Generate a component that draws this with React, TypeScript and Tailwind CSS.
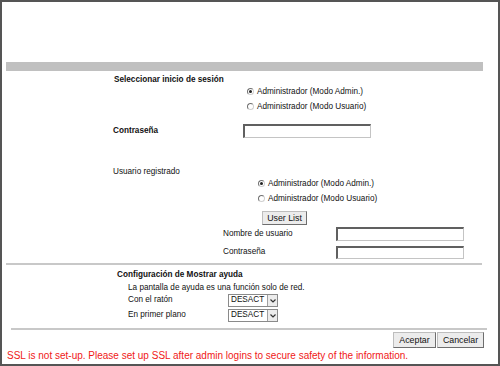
import React from "react";

const font = "font-['Liberation_Sans',Arial,sans-serif]";

function Radio({ checked, label }: { checked?: boolean; label: string }) {
  return (
    <div className="flex items-center gap-[3px]">
      <span className="w-[7px] h-[7px] rounded-full border border-[#707070] border-r-[#d0d0d0] border-b-[#d0d0d0] bg-white flex items-center justify-center">
        {checked && <span className="w-[3px] h-[3px] rounded-full bg-[#222]" />}
      </span>
      <span>{label}</span>
    </div>
  );
}

function TextBox({ w, h }: { w: string; h: string }) {
  return (
    <div
      className={`${w} ${h} bg-white border-t-2 border-l-2 border-r border-b border-[#606060] border-r-[#c4c4c4] border-b-[#c4c4c4]`}
    />
  );
}

function Select() {
  return (
    <div className="w-[50px] h-[13px] flex border border-[#8a8a8a] bg-white">
      <div className="flex-1 flex items-center pl-[2px] text-[8.2px] text-[#111]">DESACT</div>
      <div className="w-[10px] h-full bg-[#ececec] border-l border-[#a0a0a0] flex items-center justify-center">
        <svg width="6" height="4" viewBox="0 0 6 4">
          <path d="M0.5 0.5 L3 3 L5.5 0.5" fill="none" stroke="#333" strokeWidth="1.2" />
        </svg>
      </div>
    </div>
  );
}

function Btn({ label, w, h }: { label: string; w: string; h: string }) {
  return (
    <div
      className={`${w} ${h} flex items-center justify-center bg-[#ececec] border border-[#6e6e6e] border-t-[#bdbdbd] border-l-[#bdbdbd] text-[8.8px] text-[#111]`}
    >
      {label}
    </div>
  );
}

export default function App() {
  return (
    <div
      className={`w-[500px] h-[366px] bg-white border-2 border-[#555] overflow-hidden text-[8.2px] text-[#111] leading-none ${font}`}
    >
      <div className="h-[60px]" />
      <div className="ml-[4px] w-[477px] h-[9px] bg-[#c0c0c0]" />

      <div className="mt-[3px] h-[12px] flex items-center pl-[112px] font-bold">
        Seleccionar inicio de sesión
      </div>
      <div className="h-[12px] flex items-center pl-[245px]">
        <Radio checked label="Administrador (Modo Admin.)" />
      </div>
      <div className="mt-[3px] h-[12px] flex items-center pl-[245px]">
        <Radio label="Administrador (Modo Usuario)" />
      </div>

      <div className="mt-[11px] h-[14px] flex items-center pl-[111px]">
        <span className="w-[130px] font-bold">Contraseña</span>
        <TextBox w="w-[128px]" h="h-[14px]" />
      </div>

      <div className="mt-[28px] h-[12px] flex items-center pl-[111px]">Usuario registrado</div>
      <div className="h-[12px] flex items-center pl-[256px]">
        <Radio checked label="Administrador (Modo Admin.)" />
      </div>
      <div className="mt-[3px] h-[12px] flex items-center pl-[256px]">
        <Radio label="Administrador (Modo Usuario)" />
      </div>
      <div className="mt-[6px] pl-[260px]">
        <Btn label="User List" w="w-[45px]" h="h-[14px]" />
      </div>

      <div className="mt-[2px] h-[14px] flex items-center pl-[221px]">
        <span className="w-[113px]">Nombre de usuario</span>
        <TextBox w="w-[128px]" h="h-[14px]" />
      </div>
      <div className="mt-[5px] h-[13px] flex items-center pl-[221px]">
        <span className="w-[113px]">Contraseña</span>
        <TextBox w="w-[128px]" h="h-[13px]" />
      </div>

      <div className="mt-[4px] ml-[4px] w-[476px] h-[2px] bg-[#c8c8c8]" />

      <div className="mt-[4px] h-[12px] flex items-center pl-[115px] font-bold">
        Configuración de Mostrar ayuda
      </div>
      <div className="mt-[1px] h-[12px] flex items-center pl-[126px]">
        La pantalla de ayuda es una función solo de red.
      </div>
      <div className="h-[13px] flex items-center pl-[126px]">
        <span className="w-[100px]">Con el ratón</span>
        <Select />
      </div>
      <div className="mt-[2px] h-[13px] flex items-center pl-[126px]">
        <span className="w-[100px]">En primer plano</span>
        <Select />
      </div>

      <div className="mt-[6px] ml-[9px] w-[476px] h-[2px] bg-[#c8c8c8]" />

      <div className="mt-[2px] flex gap-[1px] pl-[391px]">
        <Btn label="Aceptar" w="w-[43px]" h="h-[16px]" />
        <Btn label="Cancelar" w="w-[47px]" h="h-[16px]" />
      </div>

      <div className="mt-[1px] h-[14px] flex items-center pl-[5px] text-[10px] text-[#f01818]">
        SSL is not set-up. Please set up SSL after admin logins to secure safety of the information.
      </div>
    </div>
  );
}
